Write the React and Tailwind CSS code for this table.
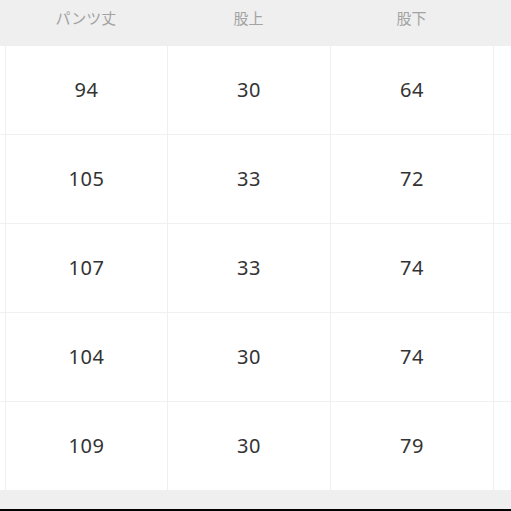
const headers = ["パンツ丈", "股上", "股下", ""];
const rows = [
  ["94", "30", "64", ""],
  ["105", "33", "72", ""],
  ["107", "33", "74", ""],
  ["104", "30", "74", ""],
  ["109", "30", "79", ""],
];

const grid = "grid grid-cols-[5px_162px_163px_163px_1fr]";

export default function App() {
  return (
    <div
      className="w-[511px] h-[511px] overflow-hidden bg-white flex flex-col"
      style={{ fontFamily: '"Noto Sans", "Noto Sans CJK JP", sans-serif' }}
    >
      <div className={`${grid} h-[46px] bg-[#efefef] shrink-0`}>
        <div />
        {headers.map((h, i) => (
          <div key={i} className="flex justify-center pt-[8px] text-[15px] leading-[20px] text-[#a3a3a3]">
            {h}
          </div>
        ))}
      </div>
      {rows.map((row, r) => (
        <div key={r} className={`${grid} h-[89px] shrink-0 border-b border-[#f0f0f0]`}>
          <div />
          {row.map((v, i) => (
            <div
              key={i}
              className="flex items-center justify-center border-l border-[#f0f0f0] text-[20px] text-[#333333] tracking-[0.5px]"
            >
              {v}
            </div>
          ))}
        </div>
      ))}
      <div className="flex-1 bg-[#efefef] border-b-2 border-black" />
    </div>
  );
}
